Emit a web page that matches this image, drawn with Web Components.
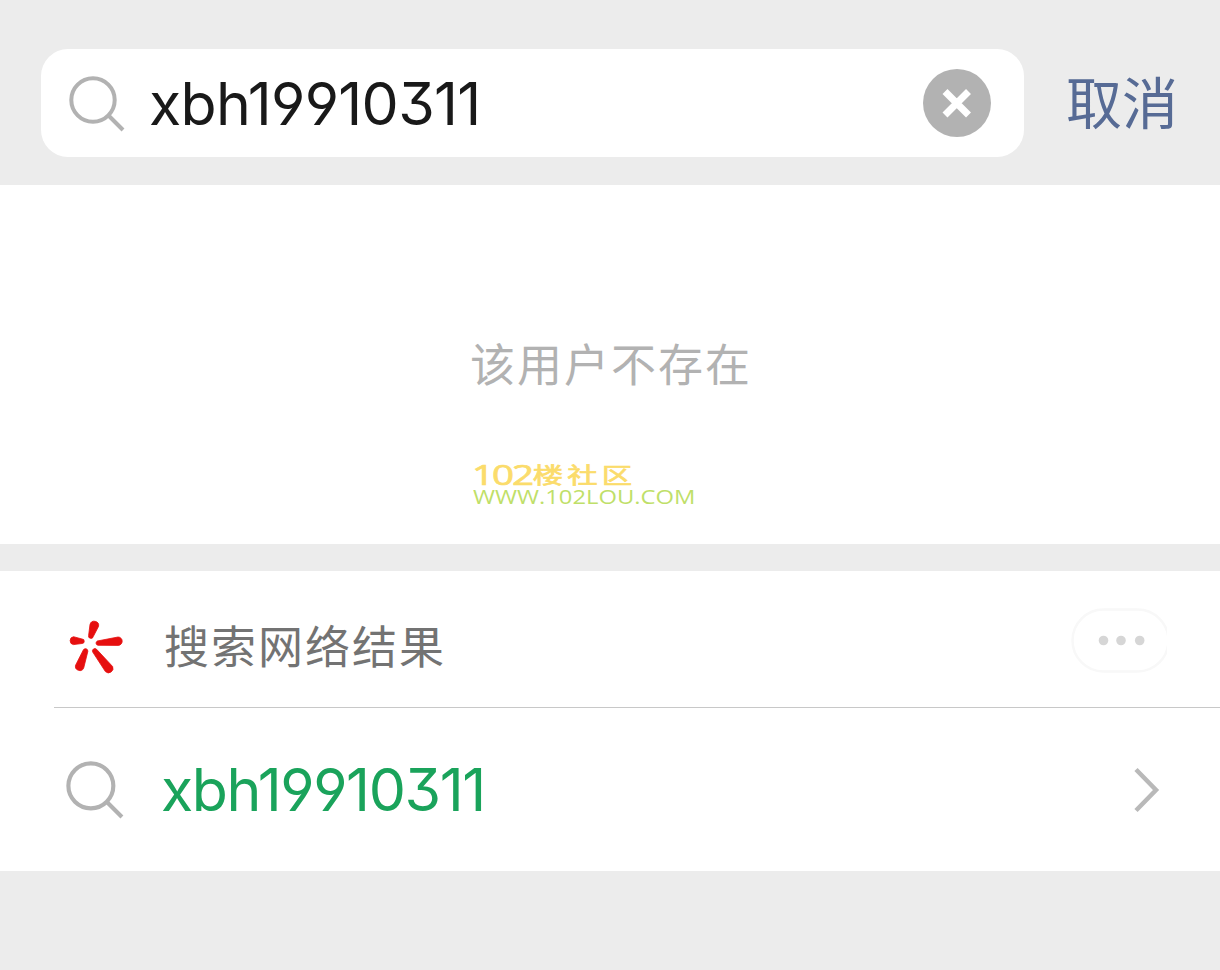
<!DOCTYPE html>
<html lang="zh-CN">
<head>
<meta charset="UTF-8">
<title>搜索</title>
<style>
    body {
        margin: 0;
        min-height: 970px;
        background: #ececec;
        font-family: Inter, "Noto Sans CJK SC", sans-serif;
    }
</style>
</head>
<body>
<search-page></search-page>

<script>
class SearchIcon extends HTMLElement {
    connectedCallback() {
        this.attachShadow({ mode: 'open' });
        this.shadowRoot.innerHTML = `
            <style>
                :host {
                    display: block;
                    flex: none;
                    width: 56px;
                    height: 56px;
                }

                svg {
                    display: block;
                    width: 100%;
                    height: 100%;
                }
            </style>
            <svg viewBox="0 0 56 56" fill="none" stroke="#b2b2b2" stroke-width="4">
                <circle cx="24" cy="24" r="21.7"></circle>
                <path d="M39.5 39.5 L54 54"></path>
            </svg>
        `;
    }
}

class QueryText extends HTMLElement {
    connectedCallback() {
        this.attachShadow({ mode: 'open' });
        this.shadowRoot.innerHTML = `
            <style>
                :host {
                    display: block;
                    font-size: 59px;
                    font-weight: 380;
                    line-height: 72px;
                    white-space: nowrap;
                    font-feature-settings: "ss01", "cv03", "cv09";
                    letter-spacing: -1.4px;
                }
            </style>
            <slot></slot>
        `;
    }
}

class SearchBar extends HTMLElement {
    connectedCallback() {
        this.attachShadow({ mode: 'open' });
        this.shadowRoot.innerHTML = `
            <style>
                :host {
                    display: flex;
                    align-items: center;
                    box-sizing: border-box;
                    height: 185px;
                    padding: 49px 0 28px 41px;
                }

                .field {
                    display: flex;
                    align-items: center;
                    box-sizing: border-box;
                    width: 983px;
                    height: 108px;
                    padding: 0 33px 0 28px;
                    border-radius: 27px;
                    background: #fff;
                }

                search-icon {
                    margin-top: 2px;
                }

                query-text {
                    flex: 1;
                    margin: 1px 0 0 24px;
                    letter-spacing: -0.7px;
                    color: #191919;
                }

                .clear {
                    width: 68px;
                    height: 68px;
                }

                .cancel {
                    margin: 2px 0 0 42px;
                    font-size: 56px;
                    line-height: 80px;
                    color: #576b95;
                    white-space: nowrap;
                }
            </style>
            <div class="field">
                <search-icon></search-icon>
                <query-text><slot></slot></query-text>
                <svg class="clear" viewBox="0 0 68 68">
                    <circle cx="34" cy="34" r="34" fill="#b2b2b2"></circle>
                    <path d="M22 22.5 L45.5 46 M45.5 22.5 L22 46" stroke="#fff" stroke-width="7"></path>
                </svg>
            </div>
            <span class="cancel">取消</span>
        `;
    }
}

class EmptyResult extends HTMLElement {
    connectedCallback() {
        this.attachShadow({ mode: 'open' });
        this.shadowRoot.innerHTML = `
            <style>
                :host {
                    display: block;
                    box-sizing: border-box;
                    height: 359px;
                    padding: 147px 0 0 470px;
                    background: #fff;
                }

                .message {
                    font-size: 45px;
                    line-height: 68px;
                    letter-spacing: 2px;
                    color: #b2b2b2;
                }

                .site {
                    width: max-content;
                    margin-left: 3px;
                    transform-origin: left top;
                }

                .name {
                    display: flex;
                    margin: 62px 0 0 2px;
                    font: 400 22px/22px "Noto Sans CJK SC", sans-serif;
                    letter-spacing: 3px;
                    color: #fbdc6b;
                    -webkit-text-stroke: 0.7px #fbdc6b;
                    transform: scaleX(1.38);
                }

                .number {
                    width: 44px;
                    font: 400 28px/25px "Open Sans", sans-serif;
                    letter-spacing: -1.5px;
                }

                .url {
                    font: 500 20px/20px "Open Sans", sans-serif;
                    color: #bfdf69;
                    transform: scaleX(1.19);
                }
            </style>
            <div class="message"><slot></slot></div>
            <div class="site name"><span class="number">102</span><span>楼社区</span></div>
            <div class="site url">WWW.102LOU.COM</div>
        `;
    }
}

class WebResults extends HTMLElement {
    connectedCallback() {
        this.attachShadow({ mode: 'open' });
        this.shadowRoot.innerHTML = `
            <style>
                :host {
                    display: block;
                    height: 300px;
                    margin-top: 27px;
                    background: #fff;
                }

                .head {
                    display: flex;
                    align-items: center;
                    box-sizing: border-box;
                    height: 137px;
                    margin-left: 54px;
                    padding: 0 53px 0 14px;
                    border-bottom: 1px solid #c8c8c8;
                }

                .logo {
                    width: 56px;
                    height: 56px;
                    margin-top: 15px;
                }

                .title {
                    flex: 1;
                    margin: 17px 0 0 40px;
                    font-size: 45px;
                    line-height: 68px;
                    letter-spacing: 2px;
                    color: #737373;
                }

                .more {
                    width: 96px;
                    height: 66px;
                    margin-top: 3px;
                }

                .row {
                    display: flex;
                    align-items: center;
                    height: 163px;
                    padding: 0 60px 0 66px;
                }

                search-icon {
                    width: 58px;
                    height: 58px;
                }

                query-text {
                    flex: 1;
                    margin: 1px 0 0 37px;
                    color: #1aa35b;
                }

                .arrow {
                    width: 28px;
                    height: 46px;
                }
            </style>
            <div class="head">
                <svg class="logo" viewBox="0 0 56 56" fill="#e60f0f" stroke="#e60f0f" stroke-width="0.8">
                    <path d="M22 5.5 A4.4 4.4 0 0 1 30.6 7.3 L25.3 17.5 A2.4 2.4 0 0 1 20.6 16.5 Z"></path>
                    <path d="M5.5 17.7 A4 4 0 0 0 5.5 25.6 L14 24.5 A2.2 2.2 0 0 0 14 20 Z"></path>
                    <path d="M50 18 A4.2 4.2 0 0 1 50 26.4 L30 26.3 A2.3 2.3 0 0 1 29.3 22 Z"></path>
                    <path d="M15.3 31 A2.4 2.4 0 0 1 19.8 32.5 L15.7 49 A4.3 4.3 0 0 1 7.6 46.2 Z"></path>
                    <path d="M24.7 33 A2.4 2.4 0 0 1 28.6 30.3 L44.6 47.5 A4.5 4.5 0 0 1 37.4 52.6 Z"></path>
                </svg>
                <div class="title">搜索网络结果</div>
                <svg class="more" viewBox="0 0 96 66">
                    <rect x="1.5" y="1.5" width="96" height="62" rx="31" fill="none" stroke="#f8f8f8" stroke-width="2.5"></rect>
                    <g fill="#d6d6d6">
                        <circle cx="32.5" cy="32.5" r="4.8"></circle>
                        <circle cx="50" cy="32.5" r="4.8"></circle>
                        <circle cx="68.7" cy="32.5" r="4.8"></circle>
                    </g>
                </svg>
            </div>
            <div class="row">
                <search-icon></search-icon>
                <query-text><slot></slot></query-text>
                <svg class="arrow" viewBox="0 0 28 46" fill="none" stroke="#b9b9b9" stroke-width="4.5">
                    <path d="M4 2.5 L24 23 L4 43.5"></path>
                </svg>
            </div>
        `;
    }
}

class SearchPage extends HTMLElement {
    connectedCallback() {
        this.attachShadow({ mode: 'open' });
        this.shadowRoot.innerHTML = `
            <style>
                :host {
                    display: block;
                }
            </style>
            <search-bar>xbh19910311</search-bar>
            <empty-result>该用户不存在</empty-result>
            <web-results>xbh19910311</web-results>
        `;
    }
}

customElements.define('search-icon', SearchIcon);
customElements.define('query-text', QueryText);
customElements.define('search-bar', SearchBar);
customElements.define('empty-result', EmptyResult);
customElements.define('web-results', WebResults);
customElements.define('search-page', SearchPage);
</script>
</body>
</html>
